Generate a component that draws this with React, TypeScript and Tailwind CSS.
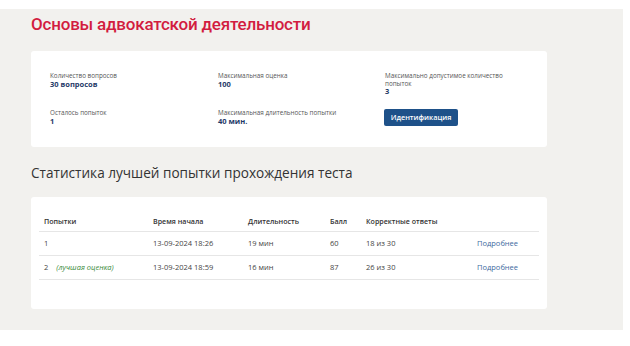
import React from 'react';

interface InfoItem {
  label: string;
  value?: string;
}

interface Attempt {
  num: string;
  best?: boolean;
  start: string;
  duration: string;
  score: string;
  correct: string;
}

const App: React.FC = () => {
  const infoTop: InfoItem[] = [
    { label: "Количество вопросов", value: "30 вопросов" },
    { label: "Максимальная оценка", value: "100" },
    { label: "Максимально допустимое количество попыток", value: "3" }
  ];

  const infoBottom: InfoItem[] = [
    { label: "Осталось попыток", value: "1" },
    { label: "Максимальная длительность попытки", value: "40 мин." }
  ];

  const attempts: Attempt[] = [
    { num: "1", start: "13-09-2024 18:26", duration: "19 мин", score: "60", correct: "18 из 30" },
    { num: "2", best: true, start: "13-09-2024 18:59", duration: "16 мин", score: "87", correct: "26 из 30" }
  ];

  return (
    <div className="w-[630px] h-[346px] bg-white pt-[9px] font-['Open_Sans',sans-serif]">
      <div className="w-[623px] h-[321px] bg-[#f2f1ee] pl-[31px] pt-[3px]">
        <h1 className="font-['Roboto',sans-serif] font-medium text-[17px] leading-[24px] text-[#d21c3f] tracking-[-0.2px]">
          Основы адвокатской деятельности
        </h1>

        <div className="mt-[15px] w-[516px] h-[96px] bg-white rounded-[3px] pl-[19px] pt-[21px]">
          <div className="grid grid-cols-[168px_167px_124px] gap-y-[13px]">
            {infoTop.map((item, i) => (
              <div key={i}>
                <div className="text-[6.3px] leading-[7.5px] text-[#555]">{item.label}</div>
                <div className="text-[7.5px] leading-[9px] font-bold text-[#1f3a68]">{item.value}</div>
              </div>
            ))}
            {infoBottom.map((item, i) => (
              <div key={i}>
                <div className="text-[6.3px] leading-[7.5px] text-[#555]">{item.label}</div>
                <div className="text-[7.5px] leading-[9px] font-bold text-[#1f3a68]">{item.value}</div>
              </div>
            ))}
            <div className="flex items-start -ml-[1px]">
              <button className="w-[74px] h-[17px] rounded-[2px] bg-[#1e5189] text-white text-[7.3px] font-semibold leading-[17px]">
                Идентификация
              </button>
            </div>
          </div>
        </div>

        <h2 className="mt-[15px] text-[13.6px] leading-[22px] text-[#333]">
          Статистика лучшей попытки прохождения теста
        </h2>

        <div className="mt-[13px] w-[516px] h-[112px] bg-white rounded-[3px] px-[8px] pt-[15px]">
          <div className="grid grid-cols-[109px_95px_82px_36px_111px_1fr] h-[20px] items-center border-b border-[#e6e6e6] text-[7.1px] font-semibold text-[#333] pl-[5px]">
            <div>Попытки</div>
            <div>Время начала</div>
            <div>Длительность</div>
            <div>Балл</div>
            <div>Корректные ответы</div>
            <div></div>
          </div>
          {attempts.map((a, i) => (
            <div
              key={i}
              className="grid grid-cols-[109px_95px_82px_36px_111px_1fr] h-[24px] items-center border-b border-[#e6e6e6] text-[7.5px] text-[#444] pl-[5px]"
            >
              <div>
                {a.num}
                {a.best && <span className="ml-[8px] italic text-[#3b8a3b]">(лучшая оценка)</span>}
              </div>
              <div>{a.start}</div>
              <div>{a.duration}</div>
              <div>{a.score}</div>
              <div>{a.correct}</div>
              <div className="text-[#3d6a9e]">Подробнее</div>
            </div>
          ))}
        </div>
      </div>
    </div>
  );
};

export default App;
